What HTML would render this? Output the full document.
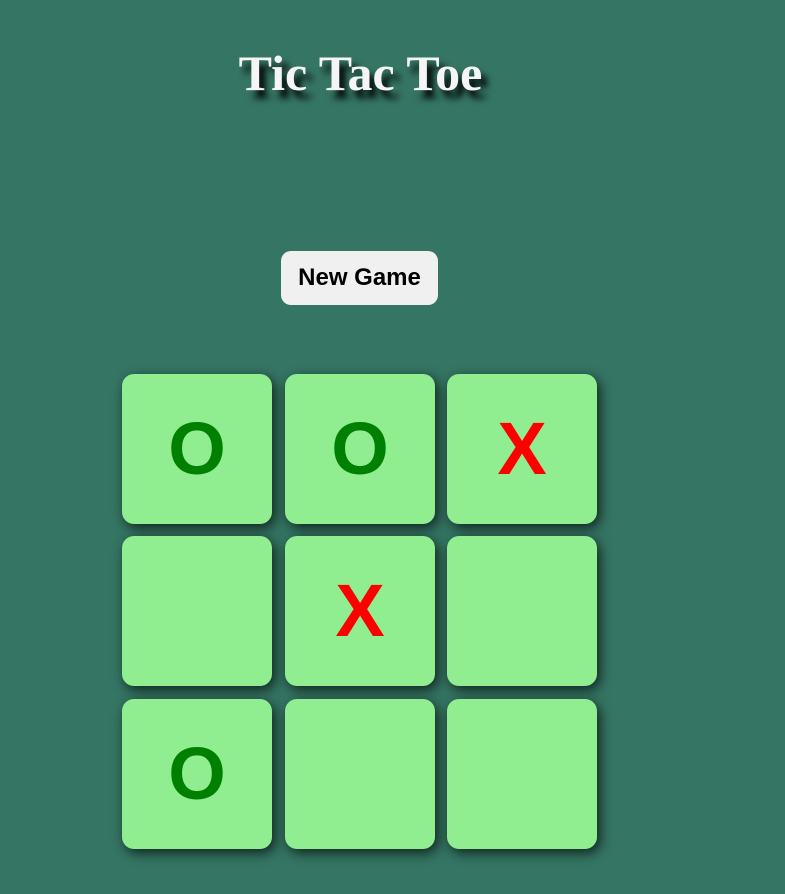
<!DOCTYPE html>
<html><head><style>
html,body{margin:0;padding:0;}
body{width:785px;height:894px;background:#357563;position:relative;overflow:hidden;}
h1{position:absolute;left:0;width:721px;top:43px;margin:0;text-align:center;font-family:"Liberation Serif",serif;font-weight:bold;font-size:50px;line-height:60px;color:#f5f5f5;text-shadow:6px 8px 7px #000;}
.btn{position:absolute;left:281px;top:251px;width:157px;height:54px;background:#f0f0f0;border-radius:10px;font-family:"Liberation Sans",sans-serif;font-weight:bold;font-size:24px;line-height:54px;text-align:center;color:#000;}
.c{position:absolute;width:150px;height:150px;background:#90ee90;border-radius:12px;box-shadow:3px 4px 12px rgba(0,0,0,0.7);font-family:"Liberation Sans",sans-serif;font-weight:bold;font-size:74px;line-height:150px;text-align:center;}
.o{color:#008000}.x{color:#ff0000}
</style></head><body>
<h1>Tic Tac Toe</h1>
<div class="btn">New Game</div>
<div class="c o" style="left:122px;top:374px">O</div>
<div class="c o" style="left:285px;top:374px">O</div>
<div class="c x" style="left:447px;top:374px">X</div>
<div class="c" style="left:122px;top:536px"></div>
<div class="c x" style="left:285px;top:536px">X</div>
<div class="c" style="left:447px;top:536px"></div>
<div class="c o" style="left:122px;top:699px">O</div>
<div class="c" style="left:285px;top:699px"></div>
<div class="c" style="left:447px;top:699px"></div>
</body></html>
